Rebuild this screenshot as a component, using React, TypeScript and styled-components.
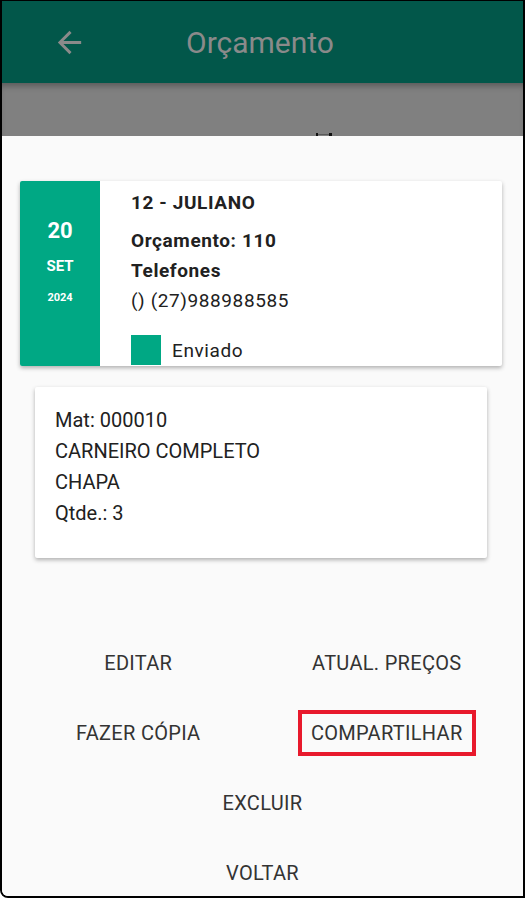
import React from "react";
import styled, { createGlobalStyle } from "styled-components";

const GlobalStyle = createGlobalStyle`
    html, body {
        margin: 0;
        padding: 0;
        background: #fff;
    }
    body {
        font-family: Roboto, "Noto Sans", sans-serif;
    }
    * {
        box-sizing: border-box;
    }
`
const Frame = styled.div`
    width: 525px;
    height: 898px;
    border: 2px solid #000;
    border-top-width: 1px;
    border-bottom-left-radius: 8px;
    overflow: hidden;
    display: flex;
    flex-direction: column;
    background: #fafafa;
`
const Header = styled.header`
    height: 82px;
    flex-shrink: 0;
    background: #02574a;
    display: flex;
    align-items: center;
    padding-left: 50px;
`
const Title = styled.h1`
    margin: 0 0 0 99px;
    font-size: 30px;
    font-weight: 400;
    color: #8a8a8a;
`
const Dim = styled.div`
    height: 53px;
    flex-shrink: 0;
    background: #808080;
    box-shadow: inset 0 6px 6px -3px rgba(0, 0, 0, 0.3);
    display: flex;
    align-items: flex-end;
    padding-left: 312px;
`
const Sheet = styled.main`
    flex: 1;
    background: #fafafa;
    padding-top: 45px;
    display: flex;
    flex-direction: column;
    color: #212121;
`
const OrderCard = styled.section`
    margin: 0 21px 0 18px;
    height: 185px;
    display: flex;
    background: #fff;
    border-radius: 2px;
    overflow: hidden;
    box-shadow: 0 2px 4px rgba(0, 0, 0, 0.3);
`
const DateStrip = styled.div`
    width: 80px;
    flex-shrink: 0;
    background: #00a884;
    color: #fff;
    display: flex;
    flex-direction: column;
    align-items: center;
    padding-top: 37px;
    font-weight: 700;
`
const Day = styled.span`
    font-size: 22px;
    line-height: 26px;
`
const Month = styled.span`
    font-size: 15px;
    line-height: 20px;
    margin-top: 12px;
`
const Year = styled.span`
    font-size: 11px;
    line-height: 14px;
    margin-top: 15px;
`
const Info = styled.div`
    padding: 10px 0 0 31px;
    font-size: 19px;
    letter-spacing: 0.6px;
`
const Client = styled.div`
    font-weight: 700;
    line-height: 24px;
    margin-bottom: 11px;
`
const Line = styled.div<{ $bold?: boolean }>`
    line-height: 30px;
    font-weight: ${p => (p.$bold ? 700 : 400)};
`
const Status = styled.div`
    margin-top: 19px;
    display: flex;
    align-items: center;
    gap: 11px;
`
const Swatch = styled.span<{ $color: string }>`
    width: 30px;
    height: 30px;
    background: ${p => p.$color};
`
const ItemCard = styled.section`
    margin: 21px 36px 0 33px;
    height: 171px;
    padding: 18px 20px;
    background: #fff;
    border-radius: 2px;
    box-shadow: 0 2px 4px rgba(0, 0, 0, 0.3);
    font-size: 20px;
    line-height: 31px;
`
const Actions = styled.div`
    margin-top: 82px;
    padding: 0 12px;
    display: grid;
    grid-template-columns: 1fr 1fr;
    grid-auto-rows: 46px;
    row-gap: 24px;
    justify-items: center;
    align-items: center;
`
const ActionButton = styled.button<{ $wide?: boolean; $marked?: boolean }>`
    grid-column: ${p => (p.$wide ? "1 / span 2" : "auto")};
    height: 38px;
    padding: 0 9px;
    border: 0;
    background: none;
    font-family: inherit;
    font-size: 20px;
    letter-spacing: 0.3px;
    text-transform: uppercase;
    color: #333;
    outline: ${p => (p.$marked ? "4px solid #e8192c" : "none")};
`

const BackArrow = () => (
    <svg width="35" height="35" viewBox="0 0 24 24" fill="#8a8a8a">
        <path d="M20 11H7.83l5.59-5.59L12 4l-8 8 8 8 1.41-1.41L7.83 13H20v-2z" />
    </svg>
)

// tops of a glyph that sticks out from behind the sheet
const Peek = () => (
    <svg width="18" height="3" viewBox="0 0 18 3">
        <rect x="2" y="0" width="2" height="3" fill="#111" />
        <rect x="4" y="1" width="11" height="1" fill="#5a5a5a" />
        <rect x="15" y="0" width="3" height="3" fill="#111" />
    </svg>
)

const App = () => {
    const actions = [
        { label: "Editar" },
        { label: "Atual. Preços" },
        { label: "Fazer Cópia" },
        { label: "Compartilhar", marked: true },
        { label: "Excluir", wide: true },
        { label: "Voltar", wide: true },
    ]

    return (
        <Frame>
            <GlobalStyle />
            <Header>
                <BackArrow />
                <Title>Orçamento</Title>
            </Header>
            <Dim>
                <Peek />
            </Dim>
            <Sheet>
                <OrderCard>
                    <DateStrip>
                        <Day>20</Day>
                        <Month>SET</Month>
                        <Year>2024</Year>
                    </DateStrip>
                    <Info>
                        <Client>12 - JULIANO</Client>
                        <Line $bold>Orçamento: 110</Line>
                        <Line $bold>Telefones</Line>
                        <Line>() (27)988988585</Line>
                        <Status>
                            <Swatch $color="#00a884" />
                            Enviado
                        </Status>
                    </Info>
                </OrderCard>

                <ItemCard>
                    <div>Mat: 000010</div>
                    <div>CARNEIRO COMPLETO</div>
                    <div>CHAPA</div>
                    <div>Qtde.: 3</div>
                </ItemCard>

                <Actions>
                    {actions.map(a => (
                        <ActionButton key={a.label} $wide={a.wide} $marked={a.marked}>
                            {a.label}
                        </ActionButton>
                    ))}
                </Actions>
            </Sheet>
        </Frame>
    )
}
export default App;
